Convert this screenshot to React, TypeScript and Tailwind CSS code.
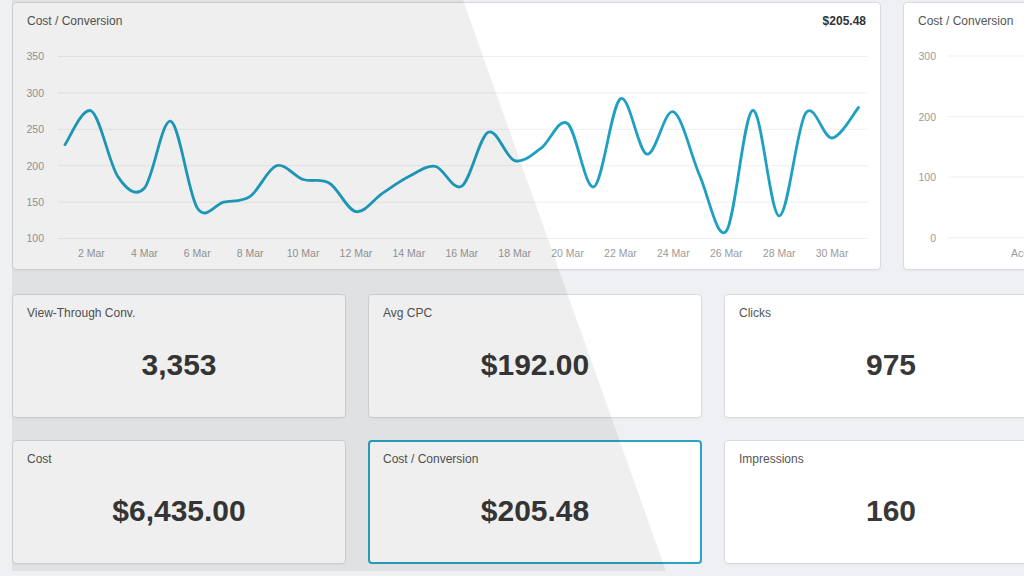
const costData = [
  229, 275, 185, 169, 261, 142, 150, 158, 200, 181, 176, 137, 162, 185, 199, 172,
  246, 207, 224, 258, 171, 292, 216, 274, 186, 110, 276, 131, 272, 238, 280,
];

const stats = [
  { label: "View-Through Conv.", value: "3,353" },
  { label: "Avg CPC", value: "$192.00" },
  { label: "Clicks", value: "975" },
  { label: "Cost", value: "$6,435.00" },
  { label: "Cost / Conversion", value: "$205.48", active: true },
  { label: "Impressions", value: "160" },
];

// page coords -> svg coords of the main chart (svg starts at page 13,29)
const sx = (x: number) => x - 13;
const sy = (y: number) => y - 29;

const dayX = (d: number) => 65 + (d - 1) * 26.45;
const valY = (v: number) => 238.5 - (v - 100) * 0.728;

function splinePath(pts: [number, number][]) {
  let d = `M${pts[0][0]},${pts[0][1]}`;
  for (let i = 0; i < pts.length - 1; i++) {
    const p0 = pts[i - 1] || pts[i];
    const p1 = pts[i];
    const p2 = pts[i + 1];
    const p3 = pts[i + 2] || p2;
    const c1x = p1[0] + (p2[0] - p0[0]) / 6;
    const c1y = p1[1] + (p2[1] - p0[1]) / 6;
    const c2x = p2[0] - (p3[0] - p1[0]) / 6;
    const c2y = p2[1] - (p3[1] - p1[1]) / 6;
    d += ` C${c1x.toFixed(1)},${c1y.toFixed(1)} ${c2x.toFixed(1)},${c2y.toFixed(1)} ${p2[0].toFixed(1)},${p2[1].toFixed(1)}`;
  }
  return d;
}

function MainChart() {
  const pts = costData.map((v, i) => [sx(dayX(i + 1)), sy(valY(v))] as [number, number]);
  const ticks = [350, 300, 250, 200, 150, 100];
  const days = [2, 4, 6, 8, 10, 12, 14, 16, 18, 20, 22, 24, 26, 28, 30];

  return (
    <div className="h-[268px] w-[869px] shrink-0 rounded-[4px] border border-[#d9dadc] bg-white shadow-[0_1px_2px_rgba(0,0,0,0.04)]">
      <div className="flex justify-between px-[14px] pt-[10px] text-[12px] leading-[16px]">
        <span className="text-[#555]">Cost / Conversion</span>
        <span className="font-bold text-[#333]">$205.48</span>
      </div>
      <svg width="867" height="240" className="block">
        {ticks.map((t) => (
          <g key={t}>
            <line
              x1={sx(58)}
              x2={sx(867)}
              y1={sy(valY(t))}
              y2={sy(valY(t))}
              stroke="#efefef"
              strokeWidth="1"
            />
            <text
              x={sx(44)}
              y={sy(valY(t)) + 3.8}
              textAnchor="end"
              fontSize="10.5"
              fill="#9a9a9a"
            >
              {t}
            </text>
          </g>
        ))}
        {days.map((d) => (
          <text
            key={d}
            x={sx(dayX(d))}
            y={sy(257)}
            textAnchor="middle"
            fontSize="10.5"
            fill="#9a9a9a"
          >
            {d} Mar
          </text>
        ))}
        <path
          d={splinePath(pts)}
          fill="none"
          stroke="#1fa0c3"
          strokeWidth="2.8"
          strokeLinejoin="round"
          strokeLinecap="round"
        />
      </svg>
    </div>
  );
}

function SideChart() {
  // svg starts at page 904,29
  const ticks = [
    { t: 300, y: 56 },
    { t: 200, y: 116.7 },
    { t: 100, y: 177 },
    { t: 0, y: 237.7 },
  ];
  return (
    <div className="h-[268px] w-[260px] shrink-0 rounded-[4px] border border-[#d9dadc] bg-white shadow-[0_1px_2px_rgba(0,0,0,0.04)]">
      <div className="px-[14px] pt-[10px] text-[12px] leading-[16px] text-[#555]">
        Cost / Conversion
      </div>
      <svg width="258" height="240" className="block">
        {ticks.map(({ t, y }) => (
          <g key={t}>
            <line x1={44} x2={258} y1={y - 29} y2={y - 29} stroke="#efefef" strokeWidth="1" />
            <text x={32} y={y - 29 + 3.8} textAnchor="end" fontSize="10.5" fill="#9a9a9a">
              {t}
            </text>
          </g>
        ))}
        <text x={107} y={257 - 29} fontSize="10.5" fill="#9a9a9a">
          Account
        </text>
      </svg>
    </div>
  );
}

function StatCard({ label, value, active }: { label: string; value: string; active?: boolean }) {
  return (
    <div
      className={`h-[124px] rounded-[4px] bg-white ${
        active
          ? "border-2 border-[#2ba3c4] px-[13px] pt-[9px]"
          : "border border-[#d9dadc] px-[14px] pt-[10px] shadow-[0_1px_2px_rgba(0,0,0,0.04)]"
      }`}
    >
      <div className="text-[12px] leading-[16px] text-[#555]">{label}</div>
      <div className="mt-[26px] text-center text-[30px] font-bold leading-[36px] text-[#383838]">
        {value}
      </div>
    </div>
  );
}

export default function App() {
  return (
    <div className="relative h-[576px] w-[1024px] overflow-hidden bg-[#eef0f3] font-['Liberation_Sans',Arial,sans-serif]">
      <div className="flex flex-col gap-[24px] pl-[12px] pt-[2px]">
        <div className="flex gap-[22px]">
          <MainChart />
          <SideChart />
        </div>
        <div className="grid w-[1046px] grid-cols-[334px_334px_334px] gap-[22px]">
          {stats.map((s) => (
            <StatCard key={s.label + s.value} {...s} />
          ))}
        </div>
      </div>
      {/* diagonal grey shade over the left part */}
      <div className="pointer-events-none absolute inset-0 bg-[rgba(0,0,0,0.063)] [clip-path:polygon(12px_0,463px_0,666px_571px,12px_571px)]" />
    </div>
  );
}
